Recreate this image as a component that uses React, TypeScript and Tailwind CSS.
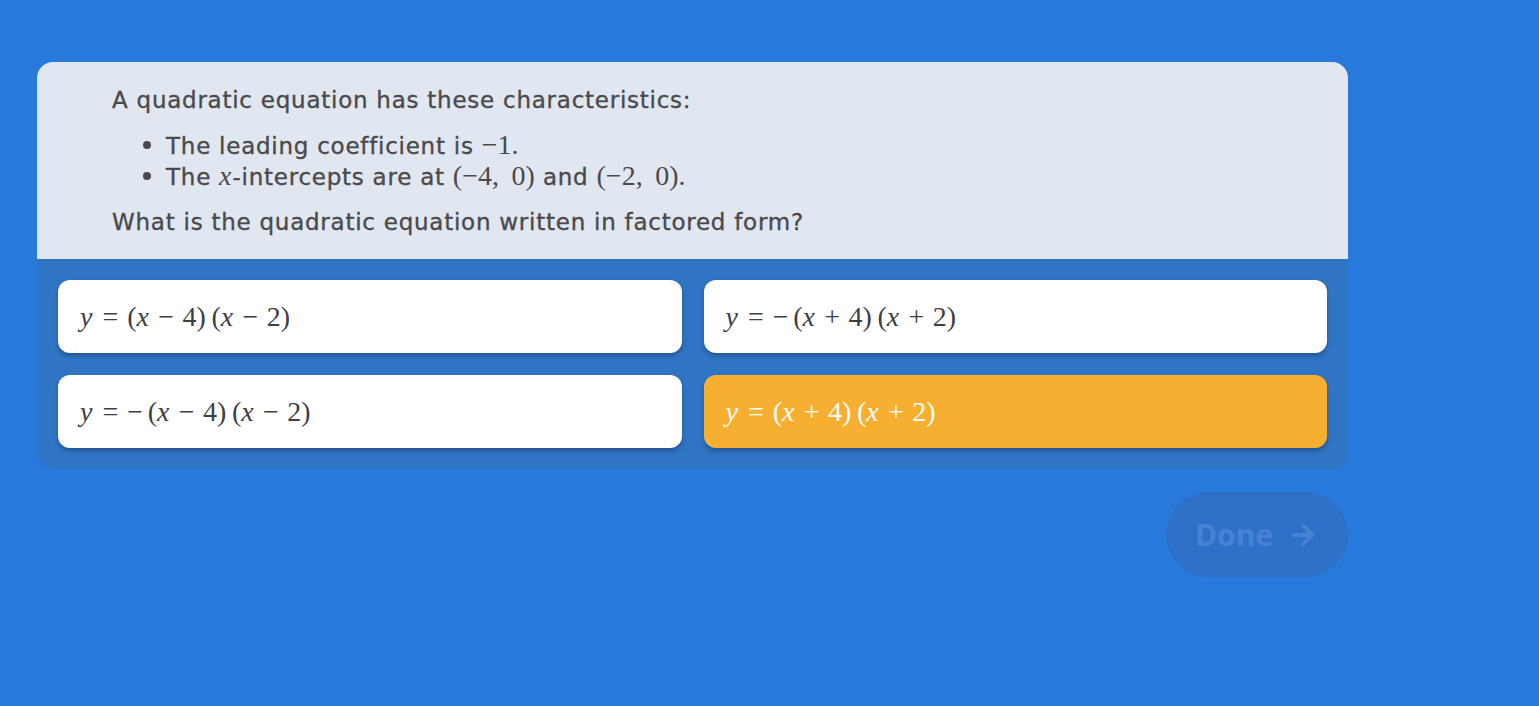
import { ArrowRight } from "lucide-react";

const M = ({ children }: { children: React.ReactNode }) => (
  <span className="font-['Liberation_Serif',serif] text-[28px] tracking-normal [-webkit-text-stroke:0px]">{children}</span>
);
const V = ({ children }: { children: React.ReactNode }) => <i className="pr-[1px]">{children}</i>;
const Bin = ({ children }: { children: React.ReactNode }) => <span className="mx-[0.3em]">{children}</span>;
const Rel = ({ children }: { children: React.ReactNode }) => <span className="mx-[0.32em]">{children}</span>;

const Point = ({ a }: { a: string }) => (
  <M>
    (−{a},<span className="ml-[0.45em]">0</span>)
  </M>
);

const Bullet = ({ children }: { children: React.ReactNode }) => (
  <li className="flex items-center h-[31px]">
    <span className="w-[8px] h-[8px] rounded-full bg-[#4a4a4a] mr-[15px]" />
    <span>{children}</span>
  </li>
);

const OPTIONS = [
  { id: 1, op: "−", neg: false },
  { id: 2, op: "+", neg: true },
  { id: 3, op: "−", neg: true },
  { id: 4, op: "+", neg: false, selected: true },
];

export default function App() {
  return (
    <div className="min-h-screen w-full bg-[#277adb] pt-[62px] pl-[37px] font-['DejaVu_Sans',sans-serif]">
      <div className="w-[1311px]">
        <div className="rounded-[16px] overflow-hidden">
          {/* Question */}
          <div className="bg-[#e1e7f1] h-[197px] pl-[75px] pt-[22px] text-[#4a4a4a] text-[23px] tracking-[0.75px] [-webkit-text-stroke:0.35px]">
            <p className="leading-[32px]">A quadratic equation has these characteristics:</p>
            <ul className="mt-[13px] pl-[31px]">
              <Bullet>
                The leading coefficient is <M>−1.</M>
              </Bullet>
              <Bullet>
                The <M><V>x</V></M>-intercepts are at <Point a="4" /> and <Point a="2" />
                <M>.</M>
              </Bullet>
            </ul>
            <p className="mt-[15px] leading-[32px]">What is the quadratic equation written in factored form?</p>
          </div>

          {/* Choices */}
          <div className="bg-[#3074c4] p-[21px] grid grid-cols-2 gap-x-[22px] gap-y-[22px]">
            {OPTIONS.map((o) => (
              <button
                key={o.id}
                className={`h-[73px] rounded-[12px] text-left px-[22px] shadow-[0_3px_4px_rgba(0,0,0,0.25)] ${
                  o.selected ? "bg-[#f7af31] text-white" : "bg-white text-[#3f3f3f]"
                }`}
              >
                <M>
                  <V>y</V>
                  <Rel>=</Rel>
                  {o.neg && <span className="mr-[0.17em]">−</span>}
                  (<V>x</V>
                  <Bin>{o.op}</Bin>4)<span className="ml-[0.2em]">(</span>
                  <V>x</V>
                  <Bin>{o.op}</Bin>2)
                </M>
              </button>
            ))}
          </div>
        </div>

        {/* Done */}
        <div className="flex justify-end mt-[23px]">
          <button className="h-[85px] w-[182px] rounded-full bg-[#2e70c8] flex items-center justify-center gap-[14px] text-[#4583d2] text-[30px] font-bold font-['Open_Sans',sans-serif]">
            Done
            <ArrowRight className="w-[32px] h-[32px]" strokeWidth={3} />
          </button>
        </div>
      </div>
    </div>
  );
}
